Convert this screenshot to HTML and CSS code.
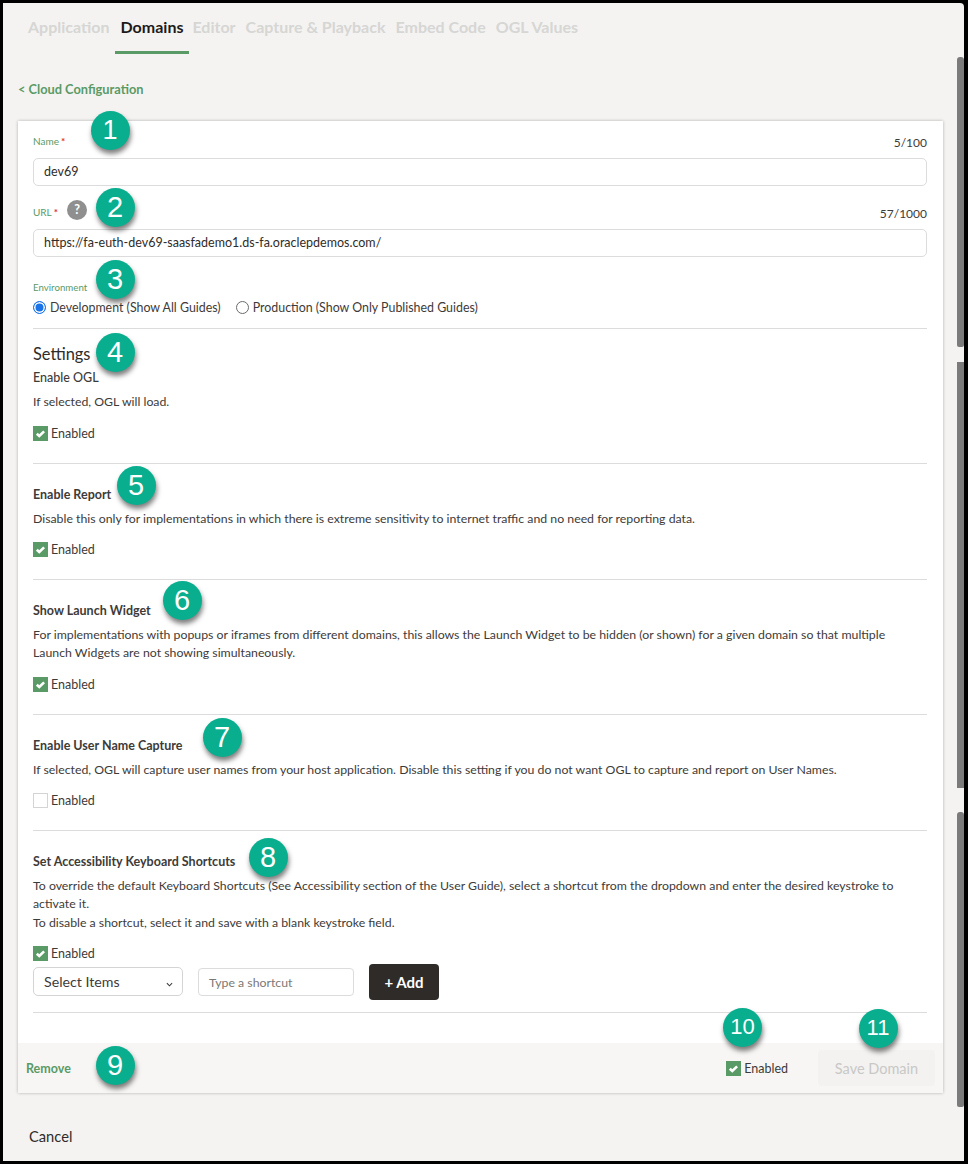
FILE: index.html
```html
<!DOCTYPE html>
<html lang="en">
<head>
<meta charset="utf-8">
<title>Domains</title>
<link rel="stylesheet" href="styles.css">
</head>
<body>
<div class="frame">
  <nav class="tabs">
    <span class="tab">Application</span>
    <span class="tab active">Domains</span>
    <span class="tab">Editor</span>
    <span class="tab">Capture &amp; Playback</span>
    <span class="tab">Embed Code</span>
    <span class="tab">OGL Values</span>
  </nav>
  <a class="back">&lt; Cloud Configuration</a>
  <main class="card">
    <div class="body">
      <div class="field-head first"><label class="lab">Name<i>*</i></label><span class="count">5/100</span></div>
      <div class="input">dev69</div>
      <div class="field-head url"><label class="lab">URL<i>*</i><span class="help">?</span></label><span class="count">57/1000</span></div>
      <div class="input">https://fa-euth-dev69-saasfademo1.ds-fa.oraclepdemos.com/</div>
      <label class="lab env">Environment</label>
      <div class="radios">
        <span class="radio on"></span><span class="radio-text">Development (Show All Guides)</span>
        <span class="radio"></span><span class="radio-text">Production (Show Only Published Guides)</span>
      </div>
      <section class="sec sec-settings">
        <h2>Settings</h2>
        <h3 class="tight">Enable OGL</h3>
        <p>If selected, OGL will load.</p>
        <div class="chk-row"><span class="chk on"><svg viewBox="0 0 15 15"><path d="M3.8 7.7l2.5 2.3 4.8-4.6"/></svg></span>Enabled</div>
      </section>
      <section class="sec">
        <h3>Enable Report</h3>
        <p>Disable this only for implementations in which there is extreme sensitivity to internet traffic and no need for reporting data.</p>
        <div class="chk-row"><span class="chk on"><svg viewBox="0 0 15 15"><path d="M3.8 7.7l2.5 2.3 4.8-4.6"/></svg></span>Enabled</div>
      </section>
      <section class="sec">
        <h3>Show Launch Widget</h3>
        <p>For implementations with popups or iframes from different domains, this allows the Launch Widget to be hidden (or shown) for a given domain so that multiple Launch Widgets are not showing simultaneously.</p>
        <div class="chk-row"><span class="chk on"><svg viewBox="0 0 15 15"><path d="M3.8 7.7l2.5 2.3 4.8-4.6"/></svg></span>Enabled</div>
      </section>
      <section class="sec">
        <h3>Enable User Name Capture</h3>
        <p>If selected, OGL will capture user names from your host application. Disable this setting if you do not want OGL to capture and report on User Names.</p>
        <div class="chk-row"><span class="chk"></span>Enabled</div>
      </section>
      <section class="sec last">
        <h3>Set Accessibility Keyboard Shortcuts</h3>
        <p>To override the default Keyboard Shortcuts (See Accessibility section of the User Guide), select a shortcut from the dropdown and enter the desired keystroke to activate it.<br>To disable a shortcut, select it and save with a blank keystroke field.</p>
        <div class="chk-row"><span class="chk on"><svg viewBox="0 0 15 15"><path d="M3.8 7.7l2.5 2.3 4.8-4.6"/></svg></span>Enabled</div>
        <div class="shortcut">
          <div class="select">Select Items<svg viewBox="0 0 8 5"><path d="M1 1l3 3 3-3"/></svg></div>
          <div class="short-input">Type a shortcut</div>
          <button class="add">+ Add</button>
        </div>
      </section>
    </div>
    <footer class="foot">
      <a class="remove">Remove</a>
      <div class="foot-right">
        <div class="chk-row foot-chk"><span class="chk on"><svg viewBox="0 0 15 15"><path d="M3.8 7.7l2.5 2.3 4.8-4.6"/></svg></span>Enabled</div>
        <button class="save">Save Domain</button>
      </div>
    </footer>
  </main>
  <a class="cancel">Cancel</a>

  <span class="bar b1"></span><span class="bar b2"></span><span class="bar b3"></span>

  <span class="badge one n1">1</span>
  <span class="badge n2">2</span>
  <span class="badge n3">3</span>
  <span class="badge n4">4</span>
  <span class="badge n5">5</span>
  <span class="badge n6">6</span>
  <span class="badge n7">7</span>
  <span class="badge n8">8</span>
  <span class="badge n9">9</span>
  <span class="badge two n10">10</span>
  <span class="badge two n11">11</span>
</div>
</body>
</html>
```
FILE: styles.css
```css
* { box-sizing: border-box; }
html, body { margin: 0; padding: 0; background: #000; }
body { width: 968px; height: 1164px; overflow: hidden; font-family: "Lato", "Liberation Sans", sans-serif; color: #2f2c2a; }
.frame { position: absolute; left: 3px; top: 3px; width: 961px; height: 1158px; background: #f4f3f1; border-top-right-radius: 4px; }

.tabs { display: flex; height: 49px; padding: 14px 0 0 20px; font-size: 16px; font-weight: 700; line-height: 20px; color: #d6d6d4; }
.tab { padding: 0 5px; height: 37px; }
.tab.active { color: #1d1b1a; border-bottom: 3px solid #5a9a66; padding: 0 6px; margin-right: -2px; }

.back { display: block; margin: 29px 0 0 15px; font-size: 12.8px; line-height: 16px; font-weight: 700; color: #5a9a66; }

.card { margin: 24px 0 0 15px; width: 925px; height: 972px; background: #fff; box-shadow: 0 0 3px rgba(0,0,0,.28); display: flex; flex-direction: column; }
.body { flex: 1; padding: 0 16px 0 15px; }

.field-head { display: flex; justify-content: space-between; align-items: flex-end; }
.field-head.first { height: 37px; padding-top: 12px; }
.field-head.url { height: 43px; }
.lab { font-size: 10px; line-height: 14px; color: #5a9a66; display: block; }
.field-head .lab { margin-bottom: 10px; }
.field-head.url .lab { margin-bottom: 9px; display: flex; align-items: center; }
.lab i { color: #e0302a; font-style: normal; font-weight: 700; margin-left: 2px; }
.count { font-size: 12px; line-height: 16px; color: #3d3b39; margin-bottom: 7px; }
.help { width: 20px; height: 20px; border-radius: 50%; background: #8f8f8f; color: #fff; font-size: 12.5px; font-weight: 700; line-height: 20px; text-align: center; margin: -4px 0 0 9px; }

.input { height: 28px; border: 1px solid #dcdcdc; border-radius: 5px; padding: 0 10px; font-size: 12.5px; line-height: 26px; color: #2f2c2a; }
.lab.env { margin-top: 23px; font-size: 9.7px; }
.radios { display: flex; align-items: center; height: 20px; font-size: 12.4px; color: #3d3b39; margin-top: 3px; }
.radio { width: 13px; height: 13px; border: 1px solid #6b6b6b; border-radius: 50%; margin-right: 4px; background: #fff; }
.radio.on { border: 1.5px solid #1b73e8; box-shadow: inset 0 0 0 1.5px #fff; background: #1b73e8; }
.radio-text { margin-right: 15px; }

.sec { border-top: 1px solid #dcdcdc; height: 116px; padding-top: 24px; }
.sec h2 { margin: 0; font-size: 16.4px; line-height: 20px; font-weight: 400; color: #2f2c2a; }
.sec h3 { margin: 0; font-size: 12.5px; line-height: 14px; font-weight: 700; color: #3d3b39; }
.sec h3.tight { margin-top: 7px; font-weight: 500; }
.sec h3.tight + p { margin-bottom: 15px; }
.sec p { margin: 8px 0 14px; font-size: 12.3px; line-height: 18.35px; color: #3d3b39; }
.sec-settings { height: 135px; padding-top: 15px; margin-top: 11px; }
.sec:nth-of-type(3) { height: 135px; }
.sec.last { height: 183px; border-bottom: 1px solid #dcdcdc; }
.chk-row { display: flex; align-items: center; font-size: 12.5px; line-height: 15px; color: #3d3b39; }
.chk { width: 15px; height: 15px; margin-right: 3px; background: #fff; border: 1px solid #d4d4d4; display: block; }
.chk.on { background: #5a9a66; border: 0; }
.chk svg { display: block; width: 15px; height: 15px; fill: none; stroke: #fff; stroke-width: 2.6; }

.shortcut { display: flex; align-items: center; margin-top: 2.5px; height: 36px; }
.select { width: 150px; height: 29px; border: 1px solid #d4d4d4; border-radius: 5px; padding: 0 10px; font-size: 14.2px; line-height: 25px; color: #3d3b39; position: relative; display: flex; justify-content: space-between; align-items: center; }
.select svg { width: 7px; height: 5px; fill: none; stroke: #3d3b39; stroke-width: 1.2; margin: 5px 0 0; position: relative; left: 1px; }
.short-input { width: 156px; height: 28px; border: 1px solid #dcdcdc; border-radius: 4px; margin-left: 15px; padding: 0 10px; font-size: 12.3px; line-height: 27px; color: #7a7876; }
.add { width: 70px; height: 36px; margin-left: 15px; background: #2f2b28; color: #fff; border: 0; border-radius: 4px; font: 700 15px "Lato", "Liberation Sans", sans-serif; }

.foot { height: 50px; background: #f7f6f4; display: flex; justify-content: space-between; align-items: center; padding: 0 8px; }
.remove { font-size: 12.5px; font-weight: 700; color: #5a9a66; }
.foot-right { display: flex; align-items: center; }
.save { width: 117px; height: 36px; margin-left: 30px; background: #f3f2f0; color: #c8c8c6; border: 0; border-radius: 4px; font: 400 14.5px "Lato", "Liberation Sans", sans-serif; }

.cancel { display: block; margin: 33px 0 0 26px; font-size: 14.7px; line-height: 20px; color: #2f2c2a; }

.bar { position: absolute; left: 954px; width: 7px; background: #7b7b7b; }
.b1 { top: 54px; height: 290px; border-radius: 3px 3px 2px 2px; }
.b2 { top: 359px; height: 426px; }
.b3 { top: 809px; height: 295px; border-radius: 3px 3px 2px 2px; }

.badge { position: absolute; width: 39px; height: 39px; border-radius: 50%; background: #09ae8e; color: #fff; font: 400 29px/39px "Liberation Sans", sans-serif; text-align: center; box-shadow: 1px 4px 5px rgba(0,0,0,.5); }
.badge.one { font-size: 27px; }
.badge.two { font-size: 22px; line-height: 38px; }
.n1 { left: 87.5px; top: 107.5px; }
.n2 { left: 92.5px; top: 184.5px; }
.n3 { left: 92.5px; top: 256.5px; }
.n4 { left: 92.5px; top: 329.5px; }
.n5 { left: 113.5px; top: 462.5px; }
.n6 { left: 159.5px; top: 577.5px; }
.n7 { left: 199.5px; top: 714.5px; }
.n8 { left: 245.5px; top: 834.5px; }
.n9 { left: 92.5px; top: 1042.5px; }
.n10 { left: 720px; top: 1004.5px; }
.n11 { left: 855.5px; top: 1005.5px; }
```
